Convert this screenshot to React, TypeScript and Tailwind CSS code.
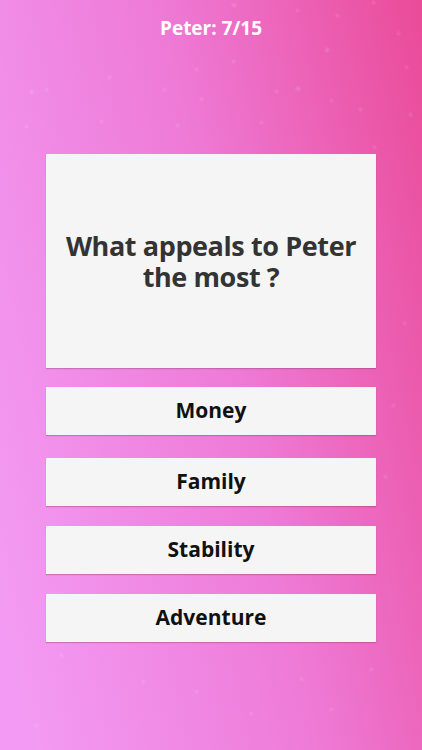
const ANSWERS = ['Money', 'Family', 'Stability', 'Adventure'];

// faint sparkles scattered over the pink background
const SPARKLES = [
  { x: 232, y: 3, s: 4 }, { x: 296, y: 9, s: 3 }, { x: 372, y: 1, s: 3 },
  { x: 336, y: 14, s: 3 }, { x: 397, y: 32, s: 3 }, { x: 325, y: 48, s: 4 },
  { x: 405, y: 66, s: 3 }, { x: 232, y: 60, s: 3 }, { x: 195, y: 68, s: 3 },
  { x: 275, y: 90, s: 3 }, { x: 296, y: 87, s: 4 }, { x: 330, y: 99, s: 3 },
  { x: 359, y: 108, s: 3 }, { x: 409, y: 113, s: 3 }, { x: 373, y: 146, s: 3 },
  { x: 30, y: 90, s: 4 }, { x: 45, y: 88, s: 3 }, { x: 108, y: 76, s: 3 },
  { x: 163, y: 88, s: 3 }, { x: 200, y: 98, s: 3 }, { x: 176, y: 124, s: 3 },
  { x: 260, y: 121, s: 3 }, { x: 25, y: 125, s: 3 }, { x: 100, y: 120, s: 3 },
  { x: 403, y: 322, s: 3 }, { x: 392, y: 404, s: 3 }, { x: 384, y: 475, s: 3 },
  { x: 60, y: 654, s: 3 }, { x: 142, y: 680, s: 3 }, { x: 250, y: 712, s: 3 },
  { x: 300, y: 678, s: 3 }, { x: 370, y: 668, s: 3 }, { x: 35, y: 724, s: 3 },
  { x: 330, y: 708, s: 3 }, { x: 195, y: 690, s: 3 },
];

export default function App() {
  return (
    <div
      className="relative w-[422px] h-[750px] overflow-hidden bg-linear-[78deg] from-[#f39bf4] from-5% via-[#ee7ad6] via-55% to-[#ea4b98]"
      style={{ fontFamily: '"Open Sans", "Noto Sans", sans-serif' }}
    >
      {/* sparkles */}
      {SPARKLES.map((p, i) => (
        <span
          key={i}
          className="absolute rounded-full bg-white/20 blur-[1px]"
          style={{ left: p.x, top: p.y, width: p.s, height: p.s }}
        />
      ))}

      <div className="relative flex flex-col items-center px-[46px]">
        <div className="pt-[15px] text-[19px] leading-[26px] font-bold text-white">
          Peter: 7/15
        </div>

        {/* question card */}
        <div className="mt-[113px] w-full h-[214px] flex items-center justify-center bg-[#f5f5f5] shadow-[0_1px_1px_rgba(120,60,100,0.35)]">
          <p className="text-center whitespace-nowrap text-[27px] leading-[31px] tracking-[-0.4px] font-bold text-[#333333]">
            What appeals to Peter
            <br />
            the most ?
          </p>
        </div>

        {/* answers */}
        <div className="w-full flex flex-col">
          {ANSWERS.map((a, i) => (
            <button
              key={a}
              className={`w-full h-[48px] flex items-center justify-center bg-[#f5f5f5] shadow-[0_1px_1px_rgba(120,60,100,0.35)] text-[21px] font-bold text-[#111111] ${
                i === 0 ? 'mt-[19px]' : i === 1 ? 'mt-[23px]' : 'mt-[20px]'
              }`}
            >
              {a}
            </button>
          ))}
        </div>
      </div>
    </div>
  );
}
